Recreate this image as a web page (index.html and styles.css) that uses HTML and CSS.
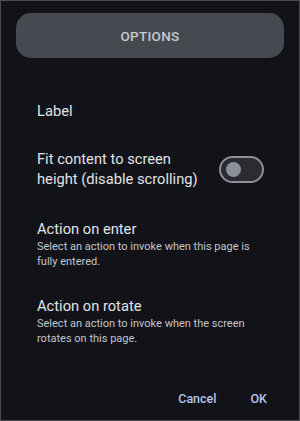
FILE: index.html
```html
<!DOCTYPE html>
<html lang="en">
<head>
    <meta charset="UTF-8">
    <meta name="viewport" content="width=device-width, initial-scale=1.0">
    <title>Options</title>
    <link rel="stylesheet" href="styles.css">
</head>
<body>

    <div class="dialog">
        <div class="header">OPTIONS</div>

        <div class="content">
            <div class="item label">Label</div>

            <div class="item toggle-row">
                <div class="title">Fit content to screen<br>height (disable scrolling)</div>
                <div class="switch"><span class="knob"></span></div>
            </div>

            <div class="item action-enter">
                <div class="title">Action on enter</div>
                <div class="desc">Select an action to invoke when this page is fully entered.</div>
            </div>

            <div class="item action-rotate">
                <div class="title">Action on rotate</div>
                <div class="desc">Select an action to invoke when the screen rotates on this page.</div>
            </div>
        </div>

        <div class="footer">
            <button class="text-btn">Cancel</button>
            <button class="text-btn">OK</button>
        </div>
    </div>

</body>
</html>
```

FILE: styles.css
```css
html, body {
    margin: 0;
    height: 100%;
}

body {
    font-family: Roboto, "Noto Sans", sans-serif;
    background: #111318;
    color: #e2e2e8;
}

.dialog {
    box-sizing: border-box;
    height: 421px;
    border: 1px solid #4a4c52;
    display: flex;
    flex-direction: column;
}

.header {
    margin: 12px 15px 0;
    height: 45px;
    border-radius: 15px;
    background: #46494f;
    color: #c6c9d0;
    font-size: 13.5px;
    font-weight: 500;
    letter-spacing: 0.3px;
    display: flex;
    align-items: center;
    justify-content: center;
}

.content {
    padding: 0 36px;
}

.item {
    font-size: 14.7px;
    line-height: 20px;
}

.label {
    margin-top: 43px;
}

.toggle-row {
    margin-top: 28px;
    display: flex;
    align-items: center;
    justify-content: space-between;
}

.switch {
    box-sizing: border-box;
    width: 45px;
    height: 27px;
    margin-right: -1px;
    border: 2px solid #8d9099;
    border-radius: 14px;
    background: #2a2c32;
    display: flex;
    align-items: center;
    padding-left: 5px;
}

.knob {
    width: 15px;
    height: 15px;
    border-radius: 50%;
    background: #8d9099;
}

.action-enter {
    margin-top: 30px;
}

.action-rotate {
    margin-top: 27px;
}

.desc {
    font-size: 11px;
    line-height: 15px;
    color: #c3c5cd;
    margin-top: 0;
}

.footer {
    margin-top: auto;
    margin-bottom: 11px;
    display: flex;
    justify-content: flex-end;
    gap: 34px;
    padding-right: 32px;
}

.text-btn {
    font-family: Roboto, sans-serif;
    font-size: 12.5px;
    font-weight: 500;
    line-height: 20px;
    color: #b2c5ef;
    background: none;
    border: none;
    padding: 0;
    cursor: pointer;
}
```
